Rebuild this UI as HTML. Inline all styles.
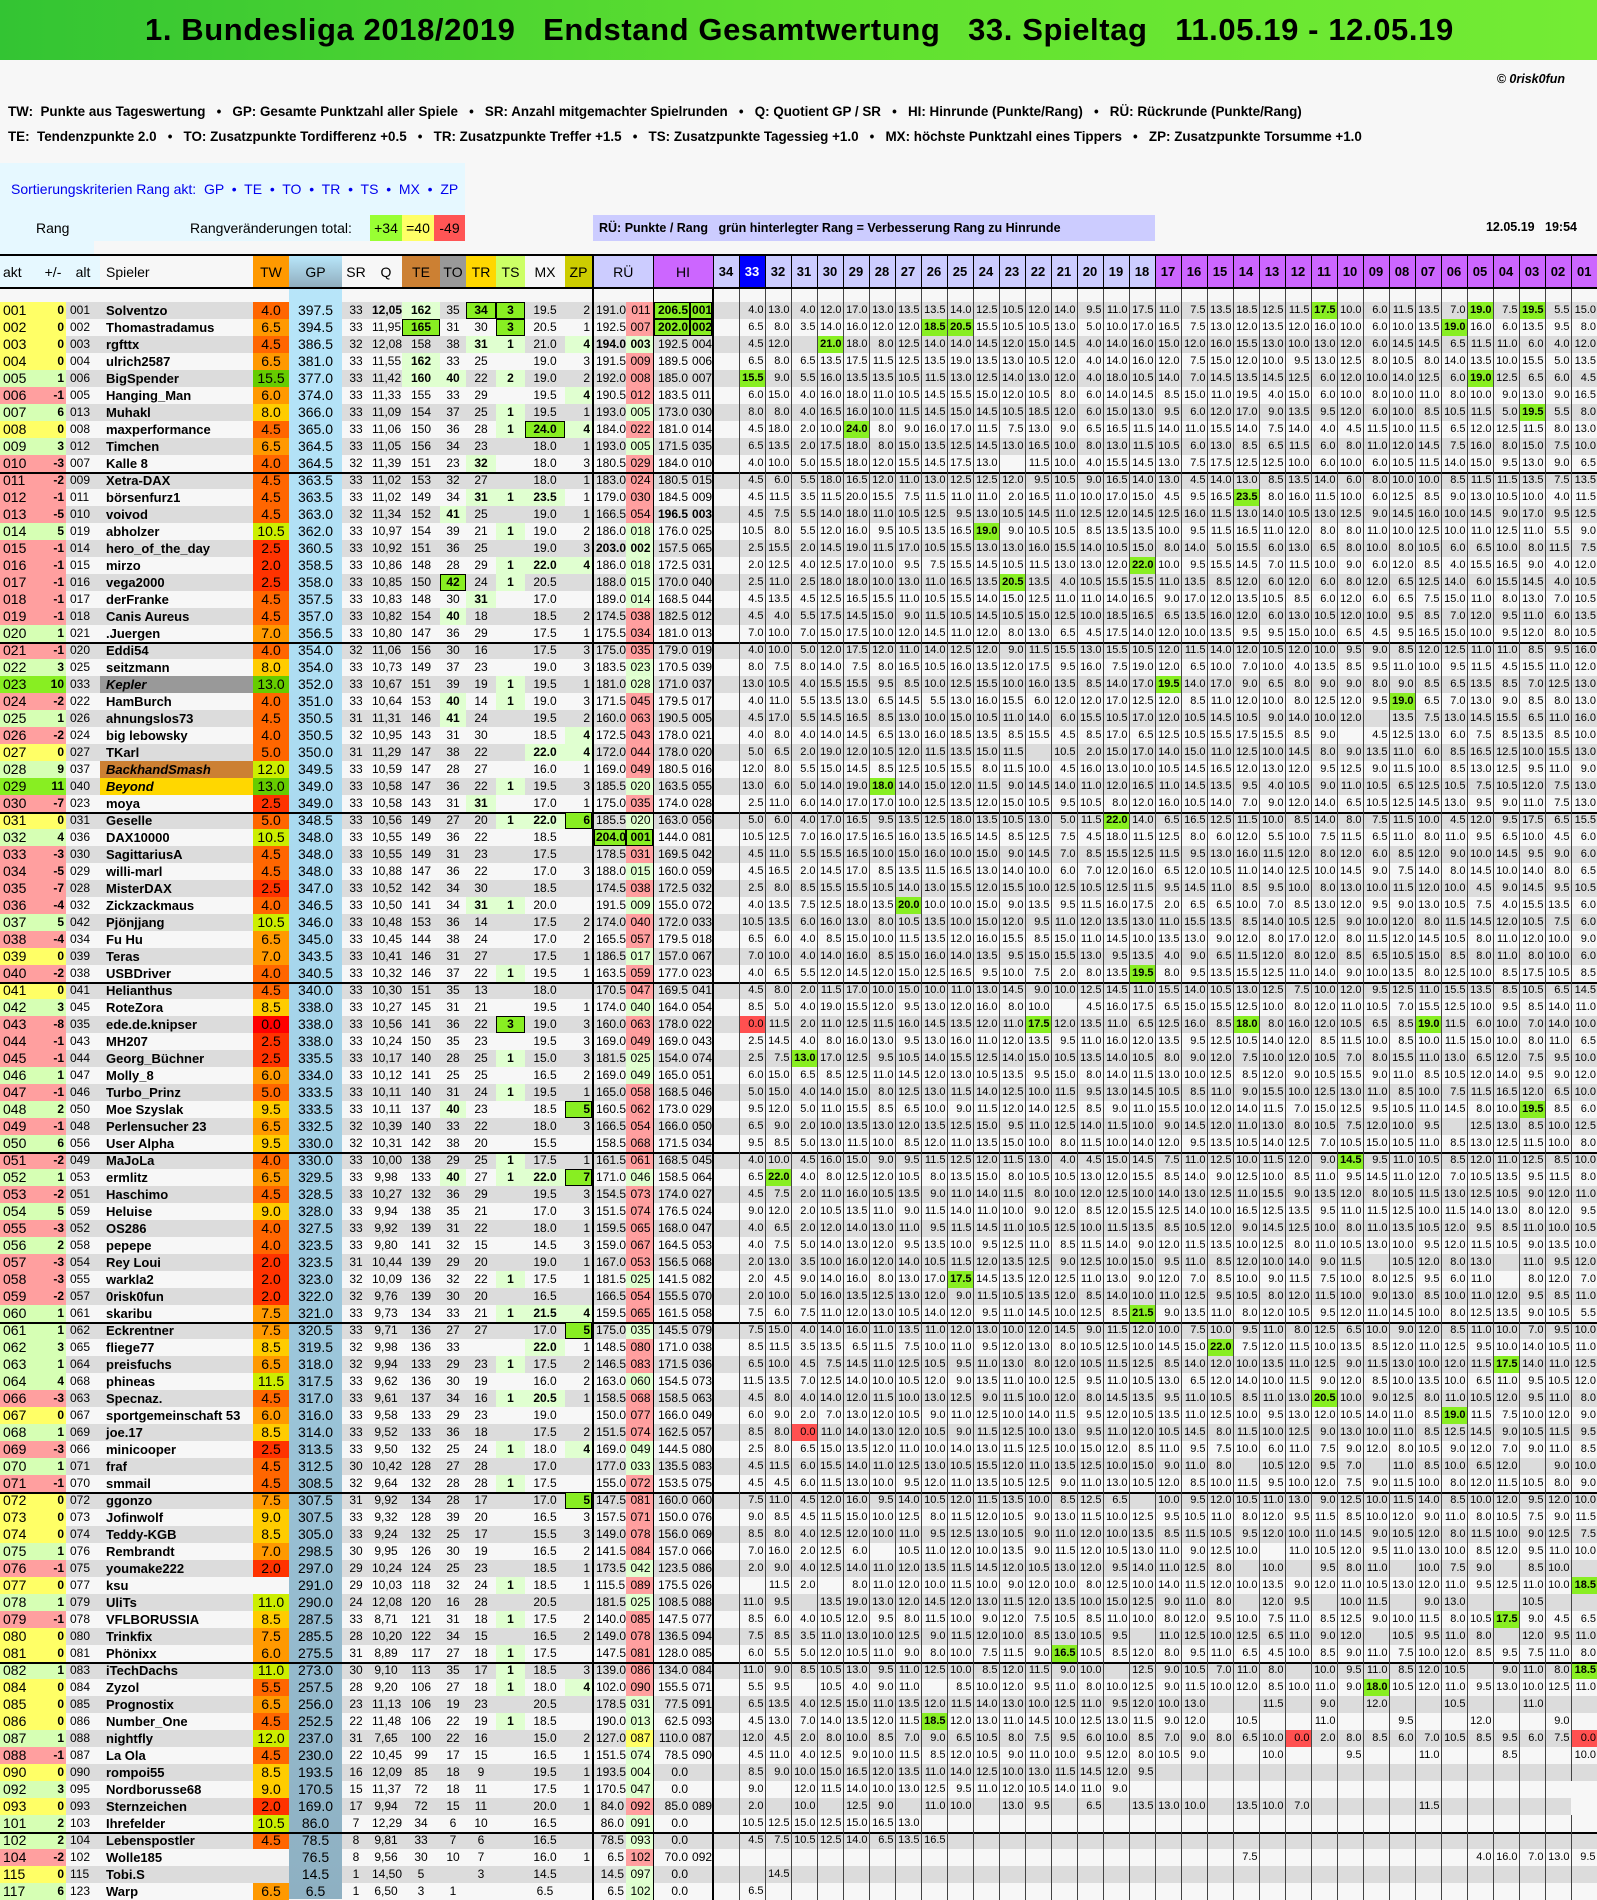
<!DOCTYPE html>
<html><head><meta charset="utf-8"><style>
body{margin:0;width:1597px;height:1899px;overflow:hidden;background:#f7f7f7;font-family:"Liberation Sans",Arial,sans-serif;position:relative;color:#000}
#ti{position:absolute;left:0;top:0;width:1597px;height:60px;background:linear-gradient(90deg,#33c433,#5fe030 50%,#74ec34);font-weight:bold;font-size:31px;line-height:60px;white-space:pre;padding-left:145px;box-sizing:border-box;letter-spacing:0.6px}
.lg{position:absolute;left:8px;font-weight:bold;font-size:13.4px;white-space:pre;line-height:16px}
#cp{position:absolute;right:32px;top:72px;font:italic bold 12.5px "Liberation Sans",sans-serif}
#sb{position:absolute;left:0;top:163px;width:465px;height:78px;background:#e6f8ff}
#sb2{position:absolute;left:0;top:241px;width:94px;height:13px;background:#e6f8ff}
#st{position:absolute;left:11px;top:181px;color:#0000ee;font-size:14px;white-space:pre}
#rg{position:absolute;left:36px;top:220px;font-size:14px}
#rv{position:absolute;left:190px;top:220px;font-size:14px}
.bx{position:absolute;top:215px;height:26px;line-height:26px;text-align:center;font-size:14px}
#ru{position:absolute;left:593px;top:215px;width:562px;height:26px;line-height:26px;background:#ccccff;font-weight:bold;font-size:12.5px;white-space:pre;padding-left:6px;box-sizing:border-box}
#dt{position:absolute;right:20px;top:220px;font-weight:bold;font-size:12.5px;white-space:pre}
#gpbg{position:absolute;left:289px;top:256px;width:53px;height:1643px;background:linear-gradient(180deg,#b8e6fa,#a8d8ee 40%,#8eb0c2)}
table{position:absolute;left:0;top:254px;border-collapse:collapse;table-layout:fixed;width:1597px}
th{height:31px;border-top:2px solid #000;border-bottom:2px solid #000;font-size:14px;font-weight:normal;padding:0;white-space:nowrap;overflow:hidden}
td{padding:0 2px;height:17px;line-height:17px;font-size:12px;white-space:nowrap;overflow:hidden;text-align:right}
tr.bl td{height:13px;background:#f7f7f7}
tr.g td{background:#dcdcdc}
td:nth-child(6){background:transparent!important;text-align:center;font-size:14px}
td:nth-child(1){text-align:left;font-size:14px;padding-left:3px}
td:nth-child(2){font-weight:bold}
td:nth-child(3){text-align:left;padding-left:4px}
td:nth-child(4){text-align:left;font-weight:bold;font-size:13px;padding-left:6px}
td:nth-child(5){text-align:center;font-size:14px}
td:nth-child(n+7):nth-child(-n+13){text-align:center}
td:nth-child(15){border-left:2px solid #000}
td:nth-child(17){border-left:1px solid #000}
td:nth-child(18){text-align:left}
td:nth-child(n+19){border-left:1px solid #444;font-size:11px;padding:0 1px}
td:nth-child(19){border-left:2px solid #000}
tr.z td:nth-child(-n+2){background:#ffff66}
tr.p td:nth-child(-n+2){background:#d6ffb4}
tr.P td:nth-child(-n+2){background:#88ee22}
tr.m td:nth-child(-n+2){background:#ff9f9f}
tr.s td{box-shadow:inset 0 2px #000}
tr.k td:nth-child(4){background:#999;font-style:italic}
tr.bh td:nth-child(4){background:#cc8033;font-style:italic}
tr.be td:nth-child(4){background:#ffd700;font-style:italic}
tr td.t0{background:#ff0000}
tr td.tr{background:#ff3300}
tr td.t1{background:#ff6600}
tr td.t2{background:#ff9900}
tr td.t3{background:#ffcc00}
tr td.t4{background:#ccee00}
tr td.t5{background:#66cc00}
tr td.r{background:#ff9f9f}
tr td.e{background:#e0ffd0}
tr td.y{background:#ffff66}
tr td.l{background:#e0ffd0;font-weight:bold}
tr td.b{background:#88ee22;font-weight:bold;box-shadow:inset 0 0 0 1px #000}
tr td.h{background:#88ee22;font-weight:bold}
tr td.x{background:#ff5050}
th.c1{background:#e6f8ff}
th.tw{background:#ff9900}
th.gp{background:linear-gradient(180deg,#b8e6fa,#90adbd)}
th.te{background:#cc8033}
th.to{background:#999}
th.trr{background:#ffd700}
th.ts{background:#ccff66}
th.zp{background:#cccc00}
th.ru{background:#ccccff;border-left:2px solid #000}
th.hi{background:#cc66ff;border-left:1px solid #000}
th.a{background:#ccccff;border-left:1px solid #000;font-weight:bold;font-size:13px}
th.v{background:#cc66ff;border-left:1px solid #000;font-weight:bold;font-size:13px}
th.c33{background:#0000ff;color:#fff;border-left:1px solid #000;font-weight:bold;font-size:13px}
</style></head><body>
<div id="ti">1. Bundesliga 2018/2019   Endstand Gesamtwertung   33. Spieltag   11.05.19 - 12.05.19</div>
<div id="cp">© 0risk0fun</div>
<div class="lg" style="top:104px">TW:  Punkte aus Tageswertung   •   GP: Gesamte Punktzahl aller Spiele   •   SR: Anzahl mitgemachter Spielrunden   •   Q: Quotient GP / SR   •   HI: Hinrunde (Punkte/Rang)   •   RÜ: Rückrunde (Punkte/Rang)</div>
<div class="lg" style="top:129px">TE:  Tendenzpunkte 2.0   •   TO: Zusatzpunkte Tordifferenz +0.5   •   TR: Zusatzpunkte Treffer +1.5   •   TS: Zusatzpunkte Tagessieg +1.0   •   MX: höchste Punktzahl eines Tippers   •   ZP: Zusatzpunkte Torsumme +1.0</div>
<div id="sb"></div><div id="sb2"></div>
<div id="st">Sortierungskriterien Rang akt:  GP  •  TE  •  TO  •  TR  •  TS  •  MX  •  ZP</div>
<div id="rg">Rang</div>
<div id="rv">Rangveränderungen total:</div>
<div class="bx" style="left:370px;width:32px;background:#99ff33">+34</div>
<div class="bx" style="left:402px;width:32px;background:#ffff66">=40</div>
<div class="bx" style="left:434px;width:31px;background:#ff5555">-49</div>
<div id="ru">RÜ: Punkte / Rang   grün hinterlegter Rang = Verbesserung Rang zu Hinrunde</div>
<div id="dt">12.05.19   19:54</div>
<div id="gpbg"></div>
<table>
<colgroup><col style="width:40px"><col style="width:26px"><col style="width:34px"><col style="width:153px"><col style="width:36px"><col style="width:53px"><col style="width:28px"><col style="width:32px"><col style="width:38px"><col style="width:26px"><col style="width:30px"><col style="width:29px"><col style="width:40px"><col style="width:28px"><col style="width:33px"><col style="width:27px"><col style="width:37px"><col style="width:23px"><col span="34" style="width:26px"></colgroup>
<thead><tr><th class="c1" style="text-align:left;padding-left:3px">akt</th><th class="c1">+/-</th><th class="c1">alt</th><th style="text-align:left;padding-left:6px">Spieler</th><th class="tw">TW</th><th class="gp">GP</th><th>SR</th><th>Q</th><th class="te">TE</th><th class="to">TO</th><th class="trr">TR</th><th class="ts">TS</th><th>MX</th><th class="zp">ZP</th><th class="ru" colspan="2">RÜ</th><th class="hi" colspan="2">HI</th><th class="a">34</th><th class="c33">33</th><th class="a">32</th><th class="a">31</th><th class="a">30</th><th class="a">29</th><th class="a">28</th><th class="a">27</th><th class="a">26</th><th class="a">25</th><th class="a">24</th><th class="a">23</th><th class="a">22</th><th class="a">21</th><th class="a">20</th><th class="a">19</th><th class="a">18</th><th class="v">17</th><th class="v">16</th><th class="v">15</th><th class="v">14</th><th class="v">13</th><th class="v">12</th><th class="v">11</th><th class="v">10</th><th class="v">09</th><th class="v">08</th><th class="v">07</th><th class="v">06</th><th class="v">05</th><th class="v">04</th><th class="v">03</th><th class="v">02</th><th class="v">01</th></tr></thead>
<tbody>
<tr class="bl"><td></td><td></td><td></td><td></td><td></td><td></td><td></td><td></td><td></td><td></td><td></td><td></td><td></td><td></td><td></td><td></td><td></td><td></td><td></td><td></td><td></td><td></td><td></td><td></td><td></td><td></td><td></td><td></td><td></td><td></td><td></td><td></td><td></td><td></td><td></td><td></td><td></td><td></td><td></td><td></td><td></td><td></td><td></td><td></td><td></td><td></td><td></td><td></td><td></td><td></td><td></td><td></td></tr>
<tr class="g z"><td>001<td>0<td>001<td>Solventzo<td class=t1>4.0<td>397.5<td>33<td><b>12,05</b><td class=l>162<td>35<td class=b>34<td class=b>3<td>19.5<td>2<td>191.0<td class=r>011<td class=b>206.5<td class=b>001<td><td>4.0<td>13.0<td>4.0<td>12.0<td>17.0<td>13.0<td>13.5<td>13.5<td>14.0<td>12.5<td>10.5<td>12.0<td>14.0<td>9.5<td>11.0<td>17.5<td>11.0<td>7.5<td>13.5<td>18.5<td>12.5<td>11.5<td class=h>17.5<td>10.0<td>6.0<td>11.5<td>13.5<td>7.0<td class=h>19.0<td>7.5<td class=h>19.5<td>5.5<td>15.0
<tr class="z"><td>002<td>0<td>002<td>Thomastradamus<td class=t2>6.5<td>394.5<td>33<td>11,95<td class=b>165<td>31<td>30<td class=b>3<td>20.5<td>1<td>192.5<td class=r>007<td class=b>202.0<td class=b>002<td><td>6.5<td>8.0<td>3.5<td>14.0<td>16.0<td>12.0<td>12.0<td class=h>18.5<td class=h>20.5<td>15.5<td>10.5<td>10.5<td>13.0<td>5.0<td>10.0<td>17.0<td>16.5<td>7.5<td>13.0<td>12.0<td>13.5<td>12.0<td>16.0<td>10.0<td>6.0<td>10.0<td>13.5<td class=h>19.0<td>16.0<td>6.0<td>13.5<td>9.5<td>8.0
<tr class="g z"><td>003<td>0<td>003<td>rgfttx<td class=t1>4.5<td>386.5<td>32<td>12,08<td>158<td>38<td class=l>31<td class=l>1<td>21.0<td class=l>4<td><b>194.0</b><td class=e><b>003</b><td>192.5<td>004<td><td>4.5<td>12.0<td><td class=h>21.0<td>18.0<td>8.0<td>12.5<td>14.0<td>14.0<td>14.5<td>12.0<td>15.0<td>14.5<td>4.0<td>14.0<td>16.0<td>15.0<td>12.0<td>16.0<td>15.5<td>13.0<td>10.0<td>13.0<td>12.0<td>6.0<td>14.5<td>14.5<td>6.5<td>11.5<td>11.0<td>6.0<td>4.0<td>12.0
<tr class="z"><td>004<td>0<td>004<td>ulrich2587<td class=t2>6.5<td>381.0<td>33<td>11,55<td class=l>162<td>33<td>25<td><td>19.0<td>3<td>191.5<td class=r>009<td>189.5<td>006<td><td>6.5<td>8.0<td>6.5<td>13.5<td>17.5<td>11.5<td>12.5<td>13.5<td>19.0<td>13.5<td>13.0<td>10.5<td>12.0<td>4.0<td>14.0<td>16.0<td>12.0<td>7.5<td>15.0<td>12.0<td>10.0<td>9.5<td>13.0<td>12.5<td>8.0<td>10.5<td>8.0<td>14.0<td>13.5<td>10.0<td>15.5<td>5.0<td>13.5
<tr class="g p"><td>005<td>1<td>006<td>BigSpender<td class=t5>15.5<td>377.0<td>33<td>11,42<td class=l>160<td class=l>40<td>22<td class=l>2<td>19.0<td>2<td>192.0<td class=r>008<td>185.0<td>007<td><td class=h>15.5<td>9.0<td>5.5<td>16.0<td>13.5<td>13.5<td>10.5<td>11.5<td>13.0<td>12.5<td>14.0<td>13.0<td>12.0<td>4.0<td>18.0<td>10.5<td>14.0<td>7.0<td>14.5<td>13.5<td>14.5<td>12.5<td>6.0<td>12.0<td>10.0<td>14.0<td>12.5<td>6.0<td class=h>19.0<td>12.5<td>6.5<td>6.0<td>4.5
<tr class="m"><td>006<td>-1<td>005<td>Hanging_Man<td class=t2>6.0<td>374.0<td>33<td>11,33<td>155<td>33<td>29<td><td>19.5<td class=l>4<td>190.5<td class=r>012<td>183.5<td>011<td><td>6.0<td>15.0<td>4.0<td>16.0<td>18.0<td>11.0<td>10.5<td>14.5<td>15.5<td>15.0<td>12.0<td>10.5<td>8.0<td>6.0<td>14.0<td>14.5<td>8.5<td>15.0<td>11.0<td>19.5<td>4.0<td>15.0<td>6.0<td>10.0<td>8.0<td>10.0<td>11.0<td>8.0<td>10.0<td>9.0<td>13.0<td>9.0<td>16.5
<tr class="g p"><td>007<td>6<td>013<td>Muhakl<td class=t3>8.0<td>366.0<td>33<td>11,09<td>154<td>37<td>25<td class=l>1<td>19.5<td>1<td>193.0<td class=e>005<td>173.0<td>030<td><td>8.0<td>8.0<td>4.0<td>16.5<td>16.0<td>10.0<td>11.5<td>14.5<td>15.0<td>14.5<td>10.5<td>18.5<td>12.0<td>6.0<td>15.0<td>13.0<td>9.5<td>6.0<td>12.0<td>17.0<td>9.0<td>13.5<td>9.5<td>12.0<td>6.0<td>10.0<td>8.5<td>10.5<td>11.5<td>5.0<td class=h>19.5<td>5.5<td>8.0
<tr class="z"><td>008<td>0<td>008<td>maxperformance<td class=t1>4.5<td>365.0<td>33<td>11,06<td>150<td>36<td>28<td class=l>1<td class=b>24.0<td class=l>4<td>184.0<td class=r>022<td>181.0<td>014<td><td>4.5<td>18.0<td>2.0<td>10.0<td class=h>24.0<td>8.0<td>9.0<td>16.0<td>17.0<td>11.5<td>7.5<td>13.0<td>9.0<td>6.5<td>16.5<td>11.5<td>14.0<td>11.0<td>15.5<td>14.0<td>7.5<td>14.0<td>4.0<td>4.5<td>11.5<td>10.0<td>11.5<td>6.5<td>12.0<td>12.5<td>11.5<td>8.0<td>13.0
<tr class="g p"><td>009<td>3<td>012<td>Timchen<td class=t2>6.5<td>364.5<td>33<td>11,05<td>156<td>34<td>23<td><td>18.0<td>1<td>193.0<td class=e>005<td>171.5<td>035<td><td>6.5<td>13.5<td>2.0<td>17.5<td>18.0<td>8.0<td>15.0<td>13.5<td>12.5<td>14.5<td>13.0<td>16.5<td>10.0<td>8.0<td>13.0<td>11.5<td>10.5<td>6.0<td>13.0<td>8.5<td>6.5<td>11.5<td>6.0<td>8.0<td>11.0<td>12.0<td>14.5<td>7.5<td>16.0<td>8.0<td>15.0<td>7.5<td>10.0
<tr class="m"><td>010<td>-3<td>007<td>Kalle 8<td class=t1>4.0<td>364.5<td>32<td>11,39<td>151<td>23<td class=l>32<td><td>18.0<td>3<td>180.5<td class=r>029<td>184.0<td>010<td><td>4.0<td>10.0<td>5.0<td>15.5<td>18.0<td>12.0<td>15.5<td>14.5<td>17.5<td>13.0<td><td>11.5<td>10.0<td>4.0<td>15.5<td>14.5<td>13.0<td>7.5<td>17.5<td>12.5<td>12.5<td>10.0<td>6.0<td>10.0<td>6.0<td>10.5<td>11.5<td>14.0<td>15.0<td>9.5<td>13.0<td>9.0<td>6.5
<tr class="g m s"><td>011<td>-2<td>009<td>Xetra-DAX<td class=t1>4.5<td>363.5<td>33<td>11,02<td>153<td>32<td>27<td><td>18.0<td>1<td>183.0<td class=r>024<td>180.5<td>015<td><td>4.5<td>6.0<td>5.5<td>18.0<td>16.5<td>12.0<td>11.0<td>13.0<td>12.5<td>12.5<td>12.0<td>9.5<td>10.5<td>9.0<td>16.5<td>14.0<td>13.0<td>4.5<td>14.0<td>13.0<td>8.5<td>13.5<td>14.0<td>6.0<td>8.0<td>10.0<td>10.0<td>8.5<td>11.5<td>11.5<td>13.5<td>7.5<td>13.5
<tr class="m"><td>012<td>-1<td>011<td>börsenfurz1<td class=t1>4.5<td>363.5<td>33<td>11,02<td>149<td>34<td class=l>31<td class=l>1<td class=l>23.5<td>1<td>179.0<td class=r>030<td>184.5<td>009<td><td>4.5<td>11.5<td>3.5<td>11.5<td>20.0<td>15.5<td>7.5<td>11.5<td>11.0<td>11.0<td>2.0<td>16.5<td>11.0<td>10.0<td>17.0<td>15.0<td>4.5<td>9.5<td>16.5<td class=h>23.5<td>8.0<td>16.0<td>11.5<td>10.0<td>6.0<td>12.5<td>8.5<td>9.0<td>13.0<td>10.5<td>10.0<td>4.0<td>11.5
<tr class="g m"><td>013<td>-5<td>010<td>voivod<td class=t1>4.5<td>363.0<td>32<td>11,34<td>152<td class=l>41<td>25<td><td>19.0<td>1<td>166.5<td class=r>054<td><b>196.5</b><td><b>003</b><td><td>4.5<td>7.5<td>5.5<td>14.0<td>18.0<td>11.0<td>10.5<td>12.5<td>9.5<td>13.0<td>10.5<td>14.5<td>11.0<td>12.5<td>12.0<td>14.5<td>12.5<td>16.0<td>11.5<td>13.0<td>14.0<td>10.5<td>13.0<td>12.5<td>9.0<td>14.5<td>16.0<td>10.0<td>14.5<td>9.0<td>17.0<td>9.5<td>12.5
<tr class="p"><td>014<td>5<td>019<td>abholzer<td class=t4>10.5<td>362.0<td>33<td>10,97<td>154<td>39<td>21<td class=l>1<td>19.0<td>2<td>186.0<td class=e>018<td>176.0<td>025<td><td>10.5<td>8.0<td>5.5<td>12.0<td>16.0<td>9.5<td>10.5<td>13.5<td>16.5<td class=h>19.0<td>9.0<td>10.5<td>10.5<td>8.5<td>13.5<td>13.5<td>10.0<td>9.5<td>11.5<td>16.5<td>11.0<td>12.0<td>8.0<td>8.0<td>11.0<td>10.0<td>12.5<td>10.0<td>11.0<td>12.5<td>11.0<td>5.5<td>9.0
<tr class="g m"><td>015<td>-1<td>014<td>hero_of_the_day<td class=tr>2.5<td>360.5<td>33<td>10,92<td>151<td>36<td>25<td><td>19.0<td>3<td><b>203.0</b><td class=e><b>002</b><td>157.5<td>065<td><td>2.5<td>15.5<td>2.0<td>14.5<td>19.0<td>11.5<td>17.0<td>10.5<td>15.5<td>13.0<td>13.0<td>16.0<td>15.5<td>14.0<td>10.5<td>15.0<td>8.0<td>14.0<td>5.0<td>15.5<td>6.0<td>13.0<td>6.5<td>8.0<td>10.0<td>8.0<td>10.5<td>6.0<td>6.5<td>10.0<td>8.0<td>11.5<td>7.5
<tr class="m"><td>016<td>-1<td>015<td>mirzo<td class=tr>2.0<td>358.5<td>33<td>10,86<td>148<td>28<td>29<td class=l>1<td class=l>22.0<td class=l>4<td>186.0<td class=e>018<td>172.5<td>031<td><td>2.0<td>12.5<td>4.0<td>12.5<td>17.0<td>10.0<td>9.5<td>7.5<td>15.5<td>14.5<td>10.5<td>11.5<td>13.0<td>13.0<td>12.0<td class=h>22.0<td>10.0<td>9.5<td>15.5<td>14.5<td>7.0<td>11.5<td>10.0<td>9.0<td>6.0<td>12.0<td>8.5<td>4.0<td>15.5<td>16.5<td>9.0<td>4.0<td>12.0
<tr class="g m"><td>017<td>-1<td>016<td>vega2000<td class=tr>2.5<td>358.0<td>33<td>10,85<td>150<td class=b>42<td>24<td class=l>1<td>20.5<td><td>188.0<td class=e>015<td>170.0<td>040<td><td>2.5<td>11.0<td>2.5<td>18.0<td>18.0<td>10.0<td>13.0<td>11.0<td>16.5<td>13.5<td class=h>20.5<td>13.5<td>4.0<td>10.5<td>15.5<td>15.5<td>11.0<td>13.5<td>8.5<td>12.0<td>6.0<td>12.0<td>6.0<td>8.0<td>12.0<td>6.5<td>12.5<td>14.0<td>6.0<td>15.5<td>14.5<td>4.0<td>10.5
<tr class="m"><td>018<td>-1<td>017<td>derFranke<td class=t1>4.5<td>357.5<td>33<td>10,83<td>148<td>30<td class=l>31<td><td>17.0<td><td>189.0<td class=e>014<td>168.5<td>044<td><td>4.5<td>13.5<td>4.5<td>12.5<td>16.5<td>15.5<td>11.0<td>10.5<td>15.5<td>14.0<td>15.0<td>12.5<td>11.0<td>11.0<td>14.0<td>16.5<td>9.0<td>17.0<td>12.0<td>13.5<td>10.5<td>8.5<td>6.0<td>12.0<td>6.0<td>6.5<td>7.5<td>15.0<td>11.0<td>8.0<td>13.0<td>7.0<td>10.5
<tr class="g m"><td>019<td>-1<td>018<td>Canis Aureus<td class=t1>4.5<td>357.0<td>33<td>10,82<td>154<td class=l>40<td>18<td><td>18.5<td>2<td>174.5<td class=r>038<td>182.5<td>012<td><td>4.5<td>4.0<td>5.5<td>17.5<td>14.5<td>15.0<td>9.0<td>11.5<td>10.5<td>14.5<td>10.5<td>15.0<td>12.5<td>10.0<td>18.5<td>16.5<td>6.5<td>13.5<td>16.0<td>12.0<td>6.0<td>13.0<td>10.5<td>12.0<td>10.0<td>9.5<td>8.5<td>7.0<td>12.0<td>9.5<td>11.0<td>6.0<td>13.5
<tr class="p"><td>020<td>1<td>021<td>.Juergen<td class=t2>7.0<td>356.5<td>33<td>10,80<td>147<td>36<td>29<td><td>17.5<td>1<td>175.5<td class=r>034<td>181.0<td>013<td><td>7.0<td>10.0<td>7.0<td>15.0<td>17.5<td>10.0<td>12.0<td>14.5<td>11.0<td>12.0<td>8.0<td>13.0<td>6.5<td>4.5<td>17.5<td>14.0<td>12.0<td>10.0<td>13.5<td>9.5<td>9.5<td>15.0<td>10.0<td>6.5<td>4.5<td>9.5<td>16.5<td>15.0<td>10.0<td>9.5<td>12.0<td>8.0<td>10.5
<tr class="g m s"><td>021<td>-1<td>020<td>Eddi54<td class=t1>4.0<td>354.0<td>32<td>11,06<td>156<td>30<td>16<td><td>17.5<td>3<td>175.0<td class=r>035<td>179.0<td>019<td><td>4.0<td>10.0<td>5.0<td>12.0<td>17.5<td>12.0<td>11.0<td>14.0<td>12.5<td>12.0<td>9.0<td>11.5<td>15.5<td>13.0<td>15.5<td>10.5<td>12.0<td>11.5<td>14.0<td>12.0<td>10.5<td>12.0<td>10.0<td>9.5<td>9.0<td>8.5<td>12.0<td>12.5<td>11.0<td>11.0<td>8.5<td>9.5<td>16.0
<tr class="p"><td>022<td>3<td>025<td>seitzmann<td class=t3>8.0<td>354.0<td>33<td>10,73<td>149<td>37<td>23<td><td>19.0<td>3<td>183.5<td class=e>023<td>170.5<td>039<td><td>8.0<td>7.5<td>8.0<td>14.0<td>7.5<td>8.0<td>16.5<td>10.5<td>16.0<td>13.5<td>12.0<td>17.5<td>9.5<td>16.0<td>7.5<td>19.0<td>12.0<td>6.5<td>10.0<td>7.0<td>10.0<td>4.0<td>13.5<td>8.5<td>9.5<td>11.0<td>10.0<td>9.5<td>11.5<td>4.5<td>15.5<td>11.0<td>12.0
<tr class="g P k"><td>023<td>10<td>033<td>Kepler<td class=t5>13.0<td>352.0<td>33<td>10,67<td>151<td>39<td>19<td class=l>1<td>19.5<td>1<td>181.0<td class=e>028<td>171.0<td>037<td><td>13.0<td>10.5<td>4.0<td>15.5<td>15.5<td>9.5<td>8.5<td>10.0<td>12.5<td>15.5<td>10.0<td>16.0<td>13.5<td>8.5<td>14.0<td>17.0<td class=h>19.5<td>14.0<td>17.0<td>9.0<td>6.5<td>8.0<td>9.0<td>9.0<td>8.0<td>9.0<td>8.5<td>6.5<td>13.5<td>8.5<td>7.0<td>12.5<td>13.0
<tr class="m"><td>024<td>-2<td>022<td>HamBurch<td class=t1>4.0<td>351.0<td>33<td>10,64<td>153<td class=l>40<td>14<td class=l>1<td>19.0<td>3<td>171.5<td class=r>045<td>179.5<td>017<td><td>4.0<td>11.0<td>5.5<td>13.5<td>13.0<td>6.5<td>14.5<td>5.5<td>13.0<td>16.0<td>15.5<td>6.0<td>12.0<td>12.0<td>17.0<td>12.5<td>12.0<td>8.5<td>11.0<td>12.0<td>10.0<td>8.0<td>12.5<td>12.0<td>9.5<td class=h>19.0<td>6.5<td>7.0<td>13.0<td>9.0<td>8.5<td>8.0<td>13.0
<tr class="g p"><td>025<td>1<td>026<td>ahnungslos73<td class=t1>4.5<td>350.5<td>31<td>11,31<td>146<td class=l>41<td>24<td><td>19.5<td>2<td>160.0<td class=r>063<td>190.5<td>005<td><td>4.5<td>17.0<td>5.5<td>14.5<td>16.5<td>8.5<td>13.0<td>10.0<td>15.0<td>10.5<td>11.0<td>14.0<td>6.0<td>15.5<td>10.5<td>17.0<td>12.0<td>10.5<td>14.5<td>10.5<td>9.0<td>14.0<td>10.0<td>12.0<td><td>13.5<td>7.5<td>13.0<td>14.5<td>15.5<td>6.5<td>11.0<td>16.0
<tr class="m"><td>026<td>-2<td>024<td>big lebowsky<td class=t1>4.0<td>350.5<td>32<td>10,95<td>143<td>31<td>30<td><td>18.5<td class=l>4<td>172.5<td class=r>043<td>178.0<td>021<td><td>4.0<td>8.0<td>4.0<td>14.0<td>14.5<td>6.5<td>13.0<td>16.0<td>18.5<td>13.5<td>8.5<td>15.5<td>4.5<td>8.5<td>17.0<td>6.5<td>12.5<td>10.5<td>15.5<td>17.5<td>15.5<td>8.5<td>9.0<td><td>4.5<td>12.5<td>13.0<td>6.0<td>7.5<td>8.5<td>13.5<td>8.5<td>10.0
<tr class="g z"><td>027<td>0<td>027<td>TKarl<td class=t1>5.0<td>350.0<td>31<td>11,29<td>147<td>38<td>22<td><td class=l>22.0<td class=l>4<td>172.0<td class=r>044<td>178.0<td>020<td><td>5.0<td>6.5<td>2.0<td>19.0<td>12.0<td>10.5<td>12.0<td>11.5<td>13.5<td>15.0<td>11.5<td><td>10.5<td>2.0<td>15.0<td>17.0<td>14.0<td>15.0<td>11.0<td>12.5<td>10.0<td>14.5<td>8.0<td>9.0<td>13.5<td>11.0<td>6.0<td>8.5<td>16.5<td>12.5<td>10.0<td>15.5<td>13.0
<tr class="p bh"><td>028<td>9<td>037<td>BackhandSmash<td class=t4>12.0<td>349.5<td>33<td>10,59<td>147<td>28<td>27<td><td>16.0<td>1<td>169.0<td class=r>049<td>180.5<td>016<td><td>12.0<td>8.0<td>5.5<td>15.0<td>14.5<td>8.5<td>12.5<td>10.5<td>15.5<td>8.0<td>11.5<td>10.0<td>4.5<td>16.0<td>13.0<td>10.0<td>10.5<td>14.5<td>16.5<td>12.0<td>13.0<td>12.0<td>9.5<td>12.5<td>9.0<td>11.5<td>10.0<td>8.5<td>13.0<td>12.5<td>9.5<td>11.0<td>9.0
<tr class="g P be"><td>029<td>11<td>040<td>Beyond<td class=t5>13.0<td>349.0<td>33<td>10,58<td>147<td>36<td>22<td class=l>1<td>19.5<td>3<td>185.5<td class=e>020<td>163.5<td>055<td><td>13.0<td>6.0<td>5.0<td>14.0<td>19.0<td class=h>18.0<td>14.0<td>15.0<td>12.0<td>11.5<td>9.0<td>14.5<td>14.0<td>11.0<td>12.0<td>16.5<td>11.0<td>14.5<td>13.5<td>9.5<td>4.0<td>10.5<td>9.0<td>11.0<td>10.5<td>6.5<td>12.5<td>10.5<td>7.5<td>10.5<td>12.0<td>7.5<td>13.0
<tr class="m"><td>030<td>-7<td>023<td>moya<td class=tr>2.5<td>349.0<td>33<td>10,58<td>143<td>31<td class=l>31<td><td>17.0<td>1<td>175.0<td class=r>035<td>174.0<td>028<td><td>2.5<td>11.0<td>6.0<td>14.0<td>17.0<td>17.0<td>10.0<td>12.5<td>13.5<td>12.0<td>15.0<td>10.5<td>9.5<td>10.5<td>8.0<td>12.0<td>16.0<td>10.5<td>14.0<td>7.0<td>9.0<td>12.0<td>14.0<td>6.5<td>10.5<td>12.5<td>14.5<td>13.0<td>9.5<td>9.0<td>11.0<td>7.5<td>13.0
<tr class="g z s"><td>031<td>0<td>031<td>Geselle<td class=t1>5.0<td>348.5<td>33<td>10,56<td>149<td>27<td>20<td class=l>1<td class=l>22.0<td class=b>6<td>185.5<td class=e>020<td>163.0<td>056<td><td>5.0<td>6.0<td>4.0<td>17.0<td>16.5<td>9.5<td>13.5<td>12.5<td>18.0<td>13.5<td>10.5<td>13.0<td>5.0<td>11.5<td class=h>22.0<td>14.0<td>6.5<td>16.5<td>12.5<td>11.5<td>10.0<td>8.5<td>14.0<td>8.0<td>7.5<td>11.5<td>10.0<td>4.5<td>12.0<td>9.5<td>17.5<td>6.5<td>15.5
<tr class="p"><td>032<td>4<td>036<td>DAX10000<td class=t4>10.5<td>348.0<td>33<td>10,55<td>149<td>36<td>22<td><td>18.5<td><td class=b>204.0<td class=b>001<td>144.0<td>081<td><td>10.5<td>12.5<td>7.0<td>16.0<td>17.5<td>16.5<td>16.0<td>13.5<td>16.5<td>14.5<td>8.5<td>12.5<td>7.5<td>4.5<td>18.0<td>11.5<td>12.5<td>8.0<td>6.0<td>12.0<td>5.5<td>10.0<td>7.5<td>11.5<td>6.5<td>11.0<td>8.0<td>11.0<td>9.5<td>6.5<td>10.0<td>4.5<td>6.0
<tr class="g m"><td>033<td>-3<td>030<td>SagittariusA<td class=t1>4.5<td>348.0<td>33<td>10,55<td>149<td>31<td>23<td><td>17.5<td><td>178.5<td class=r>031<td>169.5<td>042<td><td>4.5<td>11.0<td>5.5<td>15.5<td>16.5<td>10.0<td>15.0<td>16.0<td>10.0<td>15.0<td>9.0<td>14.5<td>7.0<td>8.5<td>15.5<td>12.5<td>11.5<td>9.5<td>13.0<td>16.0<td>11.5<td>12.0<td>8.0<td>12.0<td>6.0<td>8.5<td>12.0<td>9.0<td>10.0<td>14.5<td>9.5<td>9.0<td>6.0
<tr class="m"><td>034<td>-5<td>029<td>willi-marl<td class=t1>4.5<td>348.0<td>33<td>10,88<td>147<td>36<td>22<td><td>17.0<td>3<td>188.0<td class=e>015<td>160.0<td>059<td><td>4.5<td>16.5<td>2.0<td>14.5<td>17.0<td>8.5<td>13.5<td>11.5<td>16.5<td>13.0<td>14.0<td>10.0<td>6.0<td>7.0<td>12.0<td>16.0<td>6.5<td>12.0<td>10.5<td>11.0<td>14.0<td>12.5<td>10.0<td>14.5<td>9.0<td>7.5<td>14.0<td>8.0<td>14.5<td>10.0<td>14.0<td>8.0<td>6.5
<tr class="g m"><td>035<td>-7<td>028<td>MisterDAX<td class=tr>2.5<td>347.0<td>33<td>10,52<td>142<td>34<td>30<td><td>18.5<td><td>174.5<td class=r>038<td>172.5<td>032<td><td>2.5<td>8.0<td>8.5<td>15.5<td>15.5<td>10.5<td>14.0<td>13.0<td>15.5<td>12.0<td>15.5<td>10.0<td>12.5<td>10.5<td>12.5<td>11.5<td>9.5<td>14.5<td>11.0<td>8.5<td>9.5<td>10.0<td>8.0<td>13.0<td>10.0<td>11.5<td>12.0<td>10.0<td>4.5<td>9.0<td>14.5<td>9.5<td>10.5
<tr class="m"><td>036<td>-4<td>032<td>Zickzackmaus<td class=t1>4.0<td>346.5<td>33<td>10,50<td>141<td>34<td class=l>31<td class=l>1<td>20.0<td><td>191.5<td class=e>009<td>155.0<td>072<td><td>4.0<td>13.5<td>7.5<td>12.5<td>18.0<td>13.5<td class=h>20.0<td>10.0<td>10.0<td>15.0<td>9.0<td>13.5<td>9.5<td>11.5<td>16.0<td>17.5<td>2.0<td>6.5<td>6.5<td>10.0<td>7.0<td>8.5<td>13.0<td>12.0<td>9.5<td>9.0<td>13.0<td>10.5<td>7.5<td>4.0<td>15.5<td>13.5<td>6.0
<tr class="g p"><td>037<td>5<td>042<td>Pjönjjang<td class=t4>10.5<td>346.0<td>33<td>10,48<td>153<td>36<td>14<td><td>17.5<td>2<td>174.0<td class=r>040<td>172.0<td>033<td><td>10.5<td>13.5<td>6.0<td>16.0<td>13.0<td>8.0<td>10.5<td>13.5<td>10.0<td>15.0<td>12.0<td>9.5<td>11.0<td>12.0<td>13.5<td>13.0<td>11.0<td>15.5<td>13.5<td>8.5<td>14.0<td>10.5<td>12.5<td>9.0<td>10.0<td>12.0<td>8.0<td>11.5<td>14.5<td>12.0<td>10.5<td>7.5<td>6.0
<tr class="m"><td>038<td>-4<td>034<td>Fu Hu<td class=t2>6.5<td>345.0<td>33<td>10,45<td>144<td>38<td>24<td><td>17.0<td>2<td>165.5<td class=r>057<td>179.5<td>018<td><td>6.5<td>6.0<td>4.0<td>8.5<td>15.0<td>10.0<td>11.5<td>13.5<td>12.0<td>16.0<td>15.5<td>8.5<td>15.0<td>11.0<td>14.5<td>10.0<td>13.5<td>13.0<td>9.0<td>12.0<td>8.0<td>17.0<td>12.0<td>8.0<td>11.5<td>12.0<td>14.5<td>10.5<td>8.0<td>11.0<td>12.0<td>10.0<td>9.0
<tr class="g z"><td>039<td>0<td>039<td>Teras<td class=t2>7.0<td>343.5<td>33<td>10,41<td>146<td>31<td>27<td><td>17.5<td>1<td>186.5<td class=e>017<td>157.0<td>067<td><td>7.0<td>10.0<td>4.0<td>14.0<td>16.0<td>8.5<td>15.0<td>16.0<td>14.0<td>13.5<td>9.5<td>15.0<td>15.5<td>13.0<td>9.5<td>13.5<td>4.0<td>9.0<td>6.5<td>11.5<td>12.0<td>8.0<td>12.0<td>8.5<td>6.5<td>10.5<td>15.0<td>8.5<td>8.0<td>11.0<td>8.0<td>10.0<td>6.0
<tr class="m"><td>040<td>-2<td>038<td>USBDriver<td class=t1>4.0<td>340.5<td>33<td>10,32<td>146<td>37<td>22<td class=l>1<td>19.5<td>1<td>163.5<td class=r>059<td>177.0<td>023<td><td>4.0<td>6.5<td>5.5<td>12.0<td>14.5<td>12.0<td>15.0<td>12.5<td>16.5<td>9.5<td>10.0<td>7.5<td>2.0<td>8.0<td>13.5<td class=h>19.5<td>8.0<td>9.5<td>13.5<td>15.5<td>12.5<td>11.0<td>14.0<td>9.0<td>10.0<td>13.5<td>8.0<td>12.5<td>10.0<td>8.5<td>17.5<td>10.5<td>8.5
<tr class="g z s"><td>041<td>0<td>041<td>Helianthus<td class=t1>4.5<td>340.0<td>33<td>10,30<td>151<td>35<td>13<td><td>18.0<td><td>170.5<td class=r>047<td>169.5<td>041<td><td>4.5<td>8.0<td>2.0<td>11.5<td>17.0<td>10.0<td>15.0<td>10.0<td>11.0<td>13.0<td>14.5<td>9.0<td>10.0<td>12.5<td>14.5<td>11.0<td>15.5<td>14.0<td>10.5<td>13.0<td>12.5<td>7.5<td>10.0<td>12.0<td>9.5<td>12.5<td>11.0<td>15.5<td>13.5<td>8.5<td>10.5<td>6.5<td>14.5
<tr class="p"><td>042<td>3<td>045<td>RoteZora<td class=t3>8.5<td>338.0<td>33<td>10,27<td>145<td>31<td>21<td><td>19.5<td>1<td>174.0<td class=e>040<td>164.0<td>054<td><td>8.5<td>5.0<td>4.0<td>19.0<td>15.5<td>12.0<td>9.5<td>13.0<td>12.0<td>16.0<td>8.0<td>10.0<td><td>4.5<td>16.0<td>17.5<td>6.5<td>15.0<td>15.5<td>12.5<td>10.0<td>8.0<td>12.0<td>11.0<td>10.5<td>7.0<td>15.5<td>12.5<td>10.0<td>9.5<td>8.5<td>14.0<td>11.0
<tr class="g m"><td>043<td>-8<td>035<td>ede.de.knipser<td class=t0>0.0<td>338.0<td>33<td>10,56<td>141<td>36<td>22<td class=b>3<td>19.0<td>3<td>160.0<td class=r>063<td>178.0<td>022<td><td class=x>0.0<td>11.5<td>2.0<td>11.0<td>12.5<td>11.5<td>16.0<td>14.5<td>13.5<td>12.0<td>11.0<td class=h>17.5<td>12.0<td>13.5<td>11.0<td>6.5<td>12.5<td>16.0<td>8.5<td class=h>18.0<td>8.0<td>16.0<td>12.0<td>10.5<td>6.5<td>8.5<td class=h>19.0<td>11.5<td>6.0<td>10.0<td>7.0<td>14.0<td>10.0
<tr class="m"><td>044<td>-1<td>043<td>MH207<td class=tr>2.5<td>338.0<td>33<td>10,24<td>150<td>35<td>23<td><td>19.5<td>3<td>169.0<td class=r>049<td>169.0<td>043<td><td>2.5<td>14.5<td>4.0<td>8.0<td>16.0<td>13.0<td>9.5<td>13.0<td>16.0<td>11.0<td>12.0<td>13.5<td>9.5<td>11.0<td>16.0<td>12.0<td>13.5<td>9.5<td>12.5<td>10.5<td>14.0<td>12.0<td>8.5<td>11.5<td>10.0<td>8.5<td>10.0<td>11.5<td>15.0<td>10.0<td>8.0<td>11.0<td>6.5
<tr class="g m"><td>045<td>-1<td>044<td>Georg_Büchner<td class=tr>2.5<td>335.5<td>33<td>10,17<td>140<td>28<td>25<td class=l>1<td>15.0<td>3<td>181.5<td class=e>025<td>154.0<td>074<td><td>2.5<td>7.5<td class=h>13.0<td>17.0<td>12.5<td>9.5<td>10.5<td>14.0<td>15.5<td>12.5<td>14.0<td>15.0<td>10.5<td>13.5<td>14.0<td>10.5<td>8.0<td>9.0<td>12.0<td>7.5<td>10.0<td>12.0<td>10.5<td>7.0<td>8.0<td>15.5<td>11.0<td>13.0<td>6.5<td>12.0<td>7.5<td>9.5<td>10.0
<tr class="p"><td>046<td>1<td>047<td>Molly_8<td class=t2>6.0<td>334.0<td>33<td>10,12<td>141<td>25<td>25<td><td>16.5<td>2<td>169.0<td class=e>049<td>165.0<td>051<td><td>6.0<td>15.0<td>6.5<td>8.5<td>12.5<td>11.0<td>14.5<td>12.0<td>13.0<td>10.5<td>13.5<td>9.5<td>15.0<td>8.0<td>14.0<td>11.5<td>13.0<td>10.0<td>12.5<td>8.5<td>12.0<td>9.0<td>10.5<td>15.5<td>9.0<td>11.0<td>8.5<td>10.5<td>12.0<td>14.0<td>9.5<td>9.0<td>12.0
<tr class="g m"><td>047<td>-1<td>046<td>Turbo_Prinz<td class=t1>5.0<td>333.5<td>33<td>10,11<td>140<td>31<td>24<td class=l>1<td>19.5<td>1<td>165.0<td class=r>058<td>168.5<td>046<td><td>5.0<td>15.0<td>4.0<td>14.0<td>15.0<td>8.0<td>12.5<td>13.0<td>11.5<td>14.0<td>12.5<td>10.0<td>11.5<td>9.5<td>13.0<td>14.5<td>10.5<td>8.5<td>11.0<td>9.0<td>15.5<td>10.0<td>12.5<td>13.0<td>11.0<td>8.5<td>10.0<td>7.5<td>11.5<td>16.5<td>12.0<td>6.5<td>10.0
<tr class="p"><td>048<td>2<td>050<td>Moe Szyslak<td class=t3>9.5<td>333.5<td>33<td>10,11<td>137<td class=l>40<td>23<td><td>18.5<td class=b>5<td>160.5<td class=r>062<td>173.0<td>029<td><td>9.5<td>12.0<td>5.0<td>11.0<td>15.5<td>8.5<td>6.5<td>10.0<td>9.0<td>11.5<td>12.0<td>14.0<td>12.5<td>8.5<td>9.0<td>11.0<td>15.5<td>10.0<td>12.0<td>14.0<td>11.5<td>7.0<td>15.0<td>12.5<td>9.5<td>10.5<td>11.0<td>14.5<td>8.0<td>10.0<td class=h>19.5<td>8.5<td>6.0
<tr class="g m"><td>049<td>-1<td>048<td>Perlensucher 23<td class=t2>6.5<td>332.5<td>32<td>10,39<td>140<td>33<td>22<td><td>18.0<td>3<td>166.5<td class=r>054<td>166.0<td>050<td><td>6.5<td>9.0<td>2.0<td>10.0<td>13.5<td>13.0<td>12.0<td>13.5<td>12.5<td>15.0<td>9.5<td>11.0<td>12.5<td>14.0<td>11.5<td>10.0<td>9.0<td>14.5<td>12.0<td>11.0<td>13.0<td>8.0<td>10.5<td>7.5<td>12.0<td>10.0<td>9.5<td><td>12.5<td>13.0<td>8.5<td>10.0<td>12.5
<tr class="p"><td>050<td>6<td>056<td>User Alpha<td class=t3>9.5<td>330.0<td>32<td>10,31<td>142<td>38<td>20<td><td>15.5<td><td>158.5<td class=r>068<td>171.5<td>034<td><td>9.5<td>8.5<td>5.0<td>13.0<td>11.5<td>10.0<td>8.5<td>12.0<td>11.0<td>13.5<td>15.0<td>10.0<td>8.0<td>11.5<td>10.0<td>14.0<td>12.0<td>9.5<td>13.5<td>10.5<td>14.0<td>12.5<td>7.0<td>10.5<td>15.0<td>10.5<td>11.0<td>8.5<td>13.0<td>12.5<td>11.5<td>10.0<td>8.0
<tr class="g m s"><td>051<td>-2<td>049<td>MaJoLa<td class=t1>4.0<td>330.0<td>33<td>10,00<td>138<td>29<td>25<td class=l>1<td>17.5<td>1<td>161.5<td class=r>061<td>168.5<td>045<td><td>4.0<td>10.0<td>4.5<td>16.0<td>15.0<td>9.0<td>9.5<td>11.5<td>12.5<td>12.0<td>11.5<td>13.0<td>4.0<td>4.5<td>15.0<td>14.5<td>7.5<td>11.0<td>12.5<td>10.0<td>11.5<td>12.0<td>9.0<td class=h>14.5<td>9.5<td>11.0<td>10.5<td>8.5<td>12.0<td>11.0<td>12.5<td>8.5<td>10.0
<tr class="p"><td>052<td>1<td>053<td>ermlitz<td class=t2>6.5<td>329.5<td>33<td>9,98<td>133<td class=l>40<td>27<td class=l>1<td class=l>22.0<td class=b>7<td>171.0<td class=e>046<td>158.5<td>064<td><td>6.5<td class=h>22.0<td>4.0<td>8.0<td>12.5<td>12.0<td>10.5<td>8.0<td>13.5<td>15.0<td>8.0<td>10.5<td>10.5<td>13.0<td>12.0<td>15.5<td>8.5<td>14.0<td>9.0<td>12.5<td>10.0<td>8.5<td>11.0<td>9.5<td>14.5<td>11.0<td>12.0<td>7.0<td>10.5<td>13.5<td>9.5<td>11.5<td>8.0
<tr class="g m"><td>053<td>-2<td>051<td>Haschimo<td class=t1>4.5<td>328.5<td>33<td>10,27<td>132<td>36<td>29<td><td>19.5<td>3<td>154.5<td class=r>073<td>174.0<td>027<td><td>4.5<td>7.5<td>2.0<td>11.0<td>16.0<td>10.5<td>13.5<td>9.0<td>11.0<td>14.0<td>11.5<td>8.0<td>10.0<td>12.0<td>12.5<td>10.0<td>14.0<td>13.0<td>12.5<td>11.0<td>15.5<td>9.0<td>13.5<td>12.0<td>8.0<td>10.5<td>11.5<td>13.0<td>12.5<td>10.5<td>9.0<td>12.0<td>11.0
<tr class="p"><td>054<td>5<td>059<td>Heluise<td class=t3>9.0<td>328.0<td>33<td>9,94<td>138<td>35<td>21<td><td>17.0<td>3<td>151.5<td class=r>074<td>176.5<td>024<td><td>9.0<td>12.0<td>2.0<td>10.5<td>13.5<td>11.0<td>9.0<td>11.5<td>14.0<td>11.0<td>10.0<td>9.0<td>12.0<td>8.5<td>12.0<td>15.5<td>12.5<td>14.0<td>10.0<td>16.5<td>12.5<td>13.5<td>9.5<td>11.0<td>11.5<td>12.5<td>10.0<td>11.5<td>14.0<td>13.0<td>8.0<td>12.0<td>9.5
<tr class="g m"><td>055<td>-3<td>052<td>OS286<td class=t1>4.0<td>327.5<td>33<td>9,92<td>139<td>31<td>22<td><td>18.0<td>1<td>159.5<td class=r>065<td>168.0<td>047<td><td>4.0<td>6.5<td>2.0<td>12.0<td>14.0<td>13.0<td>11.0<td>9.5<td>11.5<td>14.5<td>11.0<td>10.5<td>12.5<td>10.0<td>11.5<td>13.5<td>8.5<td>10.5<td>12.0<td>9.0<td>14.5<td>12.5<td>10.0<td>8.0<td>11.0<td>13.5<td>10.5<td>12.0<td>9.5<td>8.5<td>11.0<td>10.0<td>10.5
<tr class="p"><td>056<td>2<td>058<td>pepepe<td class=t1>4.0<td>323.5<td>33<td>9,80<td>141<td>32<td>15<td><td>14.5<td>3<td>159.0<td class=r>067<td>164.5<td>053<td><td>4.0<td>7.5<td>5.0<td>14.0<td>13.0<td>12.0<td>9.5<td>13.5<td>10.0<td>9.5<td>12.5<td>11.0<td>8.5<td>11.5<td>14.0<td>9.0<td>12.0<td>11.5<td>13.5<td>10.0<td>12.5<td>8.0<td>11.0<td>10.5<td>13.0<td>10.0<td>9.5<td>12.0<td>11.5<td>10.5<td>9.0<td>13.5<td>10.0
<tr class="g m"><td>057<td>-3<td>054<td>Rey Loui<td class=tr>2.0<td>323.5<td>31<td>10,44<td>139<td>29<td>20<td><td>19.0<td>1<td>167.0<td class=r>053<td>156.5<td>068<td><td>2.0<td>13.0<td>3.5<td>10.0<td>16.0<td>12.0<td>14.0<td>10.5<td>11.5<td>12.0<td>13.5<td>12.5<td>9.0<td>12.5<td>10.0<td>15.0<td>9.5<td>11.0<td>8.5<td>12.0<td>10.0<td>14.0<td>9.0<td>11.5<td><td>10.5<td>12.0<td>8.0<td>13.0<td><td>11.0<td>9.5<td>12.0
<tr class="m"><td>058<td>-3<td>055<td>warkla2<td class=tr>2.0<td>323.0<td>32<td>10,09<td>136<td>32<td>22<td class=l>1<td>17.5<td>1<td>181.5<td class=e>025<td>141.5<td>082<td><td>2.0<td>4.5<td>9.0<td>14.0<td>16.0<td>8.0<td>13.0<td>17.0<td class=h>17.5<td>14.5<td>13.5<td>12.0<td>12.5<td>11.0<td>13.0<td>9.0<td>12.0<td>7.0<td>8.5<td>10.0<td>9.0<td>11.5<td>7.5<td>10.0<td>8.0<td>12.5<td>9.5<td>6.0<td>11.0<td><td>8.0<td>12.0<td>7.0
<tr class="g m"><td>059<td>-2<td>057<td>0risk0fun<td class=tr>2.0<td>322.0<td>32<td>9,76<td>139<td>30<td>20<td><td>16.5<td><td>166.5<td class=r>054<td>155.5<td>070<td><td>2.0<td>10.0<td>5.0<td>16.0<td>13.5<td>12.5<td>13.0<td>12.0<td>9.0<td>11.5<td>10.5<td>13.5<td>12.0<td>8.5<td>14.0<td>10.0<td>11.0<td>12.5<td>9.5<td>10.5<td>8.0<td>12.0<td>11.5<td>10.0<td>9.0<td>13.0<td>8.5<td>10.0<td>11.0<td>12.0<td>9.5<td>8.5<td>11.0
<tr class="p"><td>060<td>1<td>061<td>skaribu<td class=t2>7.5<td>321.0<td>33<td>9,73<td>134<td>33<td>21<td class=l>1<td class=l>21.5<td class=l>4<td>159.5<td class=r>065<td>161.5<td>058<td><td>7.5<td>6.0<td>7.5<td>11.0<td>12.0<td>13.0<td>10.5<td>14.0<td>12.0<td>9.5<td>11.0<td>14.5<td>10.0<td>12.5<td>8.5<td class=h>21.5<td>9.0<td>13.5<td>11.0<td>8.0<td>12.0<td>10.5<td>9.5<td>12.0<td>11.0<td>14.5<td>10.0<td>8.0<td>12.5<td>13.5<td>9.0<td>10.5<td>5.5
<tr class="g p s"><td>061<td>1<td>062<td>Eckrentner<td class=t2>7.5<td>320.5<td>33<td>9,71<td>136<td>27<td>27<td><td>17.0<td class=b>5<td>175.0<td class=e>035<td>145.5<td>079<td><td>7.5<td>15.0<td>4.0<td>14.0<td>16.0<td>11.0<td>13.5<td>11.0<td>12.0<td>13.0<td>10.0<td>12.0<td>14.5<td>9.0<td>11.5<td>12.0<td>10.0<td>7.5<td>10.0<td>9.5<td>11.0<td>8.0<td>12.5<td>6.5<td>10.0<td>9.0<td>12.0<td>8.5<td>11.0<td>10.0<td>7.0<td>9.5<td>10.0
<tr class="p"><td>062<td>3<td>065<td>fliege77<td class=t3>8.5<td>319.5<td>32<td>9,98<td>136<td>33<td><td><td class=l>22.0<td>1<td>148.5<td class=r>080<td>171.0<td>038<td><td>8.5<td>11.5<td>3.5<td>13.5<td>6.5<td>11.5<td>7.5<td>10.0<td>11.0<td>9.5<td>12.0<td>13.0<td>8.0<td>10.5<td>12.5<td>10.0<td>14.5<td>15.0<td class=h>22.0<td>7.5<td>12.0<td>11.5<td>10.0<td>13.5<td>8.5<td>12.0<td>11.0<td>12.5<td>9.5<td>10.0<td>14.0<td>10.5<td>11.0
<tr class="g p"><td>063<td>1<td>064<td>preisfuchs<td class=t2>6.5<td>318.0<td>32<td>9,94<td>133<td>29<td>23<td class=l>1<td>17.5<td>2<td>146.5<td class=r>083<td>171.5<td>036<td><td>6.5<td>10.0<td>4.5<td>7.5<td>14.5<td>11.0<td>12.5<td>10.5<td>9.5<td>11.0<td>13.0<td>8.0<td>12.0<td>10.5<td>11.5<td>12.5<td>8.5<td>14.0<td>12.0<td>10.0<td>13.5<td>11.0<td>12.5<td>9.0<td>11.5<td>13.0<td>10.0<td>12.0<td>11.5<td class=h>17.5<td>14.0<td>11.0<td>12.5
<tr class="p"><td>064<td>4<td>068<td>phineas<td class=t4>11.5<td>317.5<td>33<td>9,62<td>136<td>30<td>19<td><td>16.0<td>2<td>163.0<td class=e>060<td>154.5<td>073<td><td>11.5<td>13.5<td>7.0<td>12.5<td>14.0<td>10.0<td>10.5<td>12.0<td>9.0<td>13.5<td>11.0<td>10.0<td>12.5<td>9.5<td>11.0<td>10.5<td>13.0<td>6.5<td>12.0<td>14.0<td>10.0<td>11.5<td>9.0<td>12.0<td>8.5<td>10.0<td>13.5<td>10.0<td>6.5<td>11.0<td>9.5<td>10.5<td>12.0
<tr class="g m"><td>066<td>-3<td>063<td>Specnaz.<td class=t1>4.5<td>317.0<td>33<td>9,61<td>137<td>34<td>16<td class=l>1<td class=l>20.5<td>1<td>158.5<td class=r>068<td>158.5<td>063<td><td>4.5<td>8.0<td>4.0<td>14.0<td>12.0<td>11.5<td>10.0<td>13.0<td>12.5<td>9.0<td>11.5<td>10.0<td>12.0<td>8.0<td>14.5<td>13.5<td>9.5<td>11.0<td>10.5<td>8.5<td>11.0<td>13.0<td class=h>20.5<td>10.0<td>9.0<td>12.5<td>8.0<td>11.0<td>10.5<td>12.0<td>9.5<td>11.0<td>8.0
<tr class="z"><td>067<td>0<td>067<td>sportgemeinschaft 53<td class=t2>6.0<td>316.0<td>33<td>9,58<td>133<td>29<td>23<td><td>19.0<td><td>150.0<td class=r>077<td>166.0<td>049<td><td>6.0<td>9.0<td>2.0<td>7.0<td>13.0<td>12.0<td>10.5<td>9.0<td>11.0<td>12.5<td>10.0<td>14.0<td>11.5<td>9.5<td>12.0<td>10.5<td>13.5<td>11.0<td>12.5<td>10.0<td>9.5<td>13.0<td>12.0<td>10.5<td>14.0<td>11.0<td>8.5<td class=h>19.0<td>11.5<td>7.5<td>10.0<td>12.0<td>9.0
<tr class="g p"><td>068<td>1<td>069<td>joe.17<td class=t3>8.5<td>314.0<td>33<td>9,52<td>133<td>36<td>18<td><td>17.5<td>2<td>151.5<td class=r>074<td>162.5<td>057<td><td>8.5<td>8.0<td class=x>0.0<td>11.0<td>14.0<td>13.0<td>12.0<td>10.5<td>9.0<td>11.5<td>12.5<td>10.0<td>13.0<td>9.5<td>11.0<td>12.0<td>10.5<td>14.5<td>8.0<td>11.5<td>10.0<td>12.5<td>9.0<td>13.0<td>10.0<td>11.0<td>8.5<td>12.5<td>14.5<td>9.0<td>10.5<td>11.5<td>9.5
<tr class="m"><td>069<td>-3<td>066<td>minicooper<td class=tr>2.5<td>313.5<td>33<td>9,50<td>132<td>25<td>24<td class=l>1<td>18.0<td class=l>4<td>169.0<td class=e>049<td>144.5<td>080<td><td>2.5<td>8.0<td>6.5<td>15.0<td>13.5<td>12.0<td>11.0<td>10.0<td>14.0<td>13.0<td>11.5<td>12.5<td>10.0<td>15.0<td>12.0<td>8.5<td>11.0<td>9.5<td>7.5<td>10.0<td>6.0<td>11.0<td>7.5<td>9.0<td>12.0<td>8.0<td>10.5<td>9.0<td>12.0<td>7.0<td>9.0<td>11.0<td>8.5
<tr class="g p"><td>070<td>1<td>071<td>fraf<td class=t1>4.5<td>312.5<td>30<td>10,42<td>128<td>27<td>28<td><td>17.0<td><td>177.0<td class=e>033<td>135.5<td>083<td><td>4.5<td>11.5<td>6.0<td>15.5<td>14.0<td>11.0<td>12.5<td>13.0<td>10.5<td>15.5<td>12.0<td>11.0<td>13.5<td>12.5<td>10.0<td>15.0<td>9.0<td>11.0<td>8.0<td><td>10.5<td>12.0<td>9.5<td>7.0<td><td>11.0<td>8.5<td>10.0<td>6.5<td>12.0<td><td>9.0<td>10.0
<tr class="m"><td>071<td>-1<td>070<td>smmail<td class=t1>4.5<td>308.5<td>32<td>9,64<td>132<td>28<td>28<td class=l>1<td>17.5<td><td>155.0<td class=r>072<td>153.5<td>075<td><td>4.5<td>4.5<td>6.0<td>11.5<td>13.0<td>10.0<td>9.5<td>12.0<td>11.0<td>13.5<td>10.5<td>12.5<td>9.0<td>11.0<td>13.0<td>10.5<td>12.0<td>8.5<td>10.0<td>11.5<td>9.5<td>10.0<td>12.0<td>7.5<td>9.0<td>11.5<td>10.0<td>8.0<td>12.0<td>11.5<td>10.5<td>8.0<td>9.0
<tr class="g z s"><td>072<td>0<td>072<td>ggonzo<td class=t2>7.5<td>307.5<td>31<td>9,92<td>134<td>28<td>17<td><td>17.0<td class=b>5<td>147.5<td class=r>081<td>160.0<td>060<td><td>7.5<td>11.0<td>4.5<td>12.0<td>16.0<td>9.5<td>14.0<td>10.5<td>12.0<td>11.5<td>13.5<td>10.0<td>8.5<td>12.5<td>6.5<td><td>10.0<td>9.5<td>12.0<td>10.5<td>11.0<td>13.0<td>9.0<td>12.5<td>10.0<td>11.5<td>14.0<td>8.5<td>10.0<td>12.0<td>9.5<td>12.0<td>10.0
<tr class="z"><td>073<td>0<td>073<td>Jofinwolf<td class=t3>9.0<td>307.5<td>33<td>9,32<td>128<td>39<td>20<td><td>16.5<td>3<td>157.5<td class=r>071<td>150.0<td>076<td><td>9.0<td>8.5<td>4.5<td>11.5<td>15.0<td>10.0<td>12.5<td>8.0<td>11.5<td>12.0<td>10.5<td>9.0<td>13.0<td>11.5<td>10.0<td>12.5<td>9.5<td>10.5<td>11.0<td>8.0<td>12.0<td>9.5<td>11.5<td>8.5<td>10.0<td>12.0<td>9.0<td>11.0<td>8.0<td>10.5<td>7.5<td>9.0<td>11.5
<tr class="g z"><td>074<td>0<td>074<td>Teddy-KGB<td class=t3>8.5<td>305.0<td>33<td>9,24<td>132<td>25<td>17<td><td>15.5<td>3<td>149.0<td class=r>078<td>156.0<td>069<td><td>8.5<td>8.0<td>4.0<td>12.5<td>12.0<td>10.0<td>11.0<td>9.5<td>12.5<td>13.0<td>10.5<td>9.0<td>11.0<td>12.0<td>10.0<td>13.5<td>8.5<td>11.5<td>10.5<td>9.5<td>12.0<td>10.0<td>11.0<td>14.5<td>9.0<td>10.5<td>12.0<td>8.0<td>11.5<td>10.0<td>9.0<td>12.5<td>7.5
<tr class="p"><td>075<td>1<td>076<td>Rembrandt<td class=t2>7.0<td>298.5<td>30<td>9,95<td>126<td>30<td>19<td><td>16.5<td>2<td>141.5<td class=r>084<td>157.0<td>066<td><td>7.0<td>16.0<td>2.0<td>12.5<td>6.0<td><td>10.5<td>11.0<td>12.0<td>10.0<td>13.5<td>9.0<td>11.5<td>12.0<td>10.5<td>13.0<td>11.0<td>9.0<td>12.5<td>10.0<td><td>11.0<td>10.5<td>12.0<td>9.5<td>11.0<td>13.0<td>10.0<td>8.5<td>12.0<td>9.5<td>11.0<td>10.0
<tr class="g m"><td>076<td>-1<td>075<td>youmake222<td class=tr>2.0<td>297.0<td>29<td>10,24<td>124<td>25<td>23<td><td>18.5<td>1<td>173.5<td class=e>042<td>123.5<td>086<td><td>2.0<td>9.0<td>4.0<td>12.5<td>14.0<td>11.0<td>12.0<td>13.5<td>11.5<td>14.5<td>12.0<td>10.5<td>13.0<td>12.0<td>9.5<td>14.0<td>11.0<td>12.5<td>8.0<td><td>10.0<td><td>9.5<td>8.0<td>11.0<td><td>10.0<td>7.5<td>9.0<td><td>8.5<td>10.0<td>
<tr class="z"><td>077<td>0<td>077<td>ksu<td><td>291.0<td>29<td>10,03<td>118<td>32<td>24<td class=l>1<td>18.5<td>1<td>115.5<td class=r>089<td>175.5<td>026<td><td><td>11.5<td>2.0<td><td>8.0<td>11.0<td>12.0<td>10.0<td>11.5<td>10.0<td>9.0<td>12.0<td>10.0<td>8.0<td>12.5<td>10.0<td>14.0<td>11.5<td>12.0<td>10.0<td>13.5<td>9.0<td>12.0<td>11.0<td>10.5<td>13.0<td>12.0<td>11.0<td>9.5<td>12.5<td>11.0<td>10.0<td class=h>18.5
<tr class="g p"><td>078<td>1<td>079<td>UliTs<td class=t4>11.0<td>290.0<td>24<td>12,08<td>120<td>16<td>28<td><td>20.5<td><td>181.5<td class=e>025<td>108.5<td>088<td><td>11.0<td>9.5<td><td>13.5<td>19.0<td>13.0<td>12.0<td>14.5<td>12.0<td>13.0<td>11.5<td>12.0<td>13.5<td>10.0<td>15.0<td>12.5<td>9.0<td>11.0<td>8.0<td><td>12.0<td>9.5<td><td>10.0<td>11.5<td><td>9.0<td>13.0<td><td><td>10.5<td><td>
<tr class="m"><td>079<td>-1<td>078<td>VFLBORUSSIA<td class=t3>8.5<td>287.5<td>33<td>8,71<td>121<td>31<td>18<td class=l>1<td>17.5<td>2<td>140.0<td class=r>085<td>147.5<td>077<td><td>8.5<td>6.0<td>4.0<td>10.5<td>12.0<td>9.5<td>8.0<td>11.5<td>10.0<td>9.0<td>12.0<td>7.5<td>10.5<td>8.5<td>11.0<td>10.0<td>8.0<td>12.0<td>9.5<td>10.0<td>7.5<td>11.0<td>8.5<td>12.5<td>9.0<td>10.0<td>11.5<td>8.0<td>10.5<td class=h>17.5<td>9.0<td>4.5<td>6.5
<tr class="g z"><td>080<td>0<td>080<td>Trinkfix<td class=t2>7.5<td>285.5<td>28<td>10,20<td>122<td>34<td>15<td><td>16.5<td>2<td>149.0<td class=r>078<td>136.5<td>094<td><td>7.5<td>8.5<td>3.5<td>11.0<td>13.0<td>10.0<td>12.5<td>9.0<td>11.5<td>12.0<td>10.0<td>8.5<td>13.0<td>10.5<td>9.5<td><td>11.0<td>12.5<td>10.0<td>12.5<td>6.5<td>11.0<td>9.0<td>12.0<td><td>10.5<td>9.5<td>11.0<td>8.0<td><td>12.0<td>9.5<td>11.0
<tr class="z"><td>081<td>0<td>081<td>Phönixx<td class=t2>6.0<td>275.5<td>31<td>8,89<td>117<td>27<td>18<td class=l>1<td>17.5<td><td>147.5<td class=r>081<td>128.0<td>085<td><td>6.0<td>5.5<td>5.0<td>12.0<td>10.5<td>11.0<td>9.0<td>8.0<td>10.0<td>7.5<td>11.5<td>9.0<td class=h>16.5<td>10.5<td>8.5<td>12.0<td>8.0<td>9.5<td>11.0<td>6.5<td>4.5<td>10.0<td>8.5<td>9.0<td>11.0<td>7.5<td>10.0<td>12.0<td>8.5<td>9.5<td>7.5<td>11.0<td>8.0
<tr class="g p s"><td>082<td>1<td>083<td>iTechDachs<td class=t4>11.0<td>273.0<td>30<td>9,10<td>113<td>35<td>17<td class=l>1<td>18.5<td>3<td>139.0<td class=r>086<td>134.0<td>084<td><td>11.0<td>9.0<td>8.5<td>10.5<td>13.0<td>9.5<td>11.0<td>12.5<td>10.0<td>8.5<td>12.0<td>11.5<td>9.0<td>10.0<td><td>12.5<td>9.0<td>10.5<td>7.0<td>11.0<td>8.0<td><td>10.0<td>9.5<td>11.0<td>8.5<td>12.0<td>10.5<td><td>9.0<td>11.0<td>8.0<td class=h>18.5
<tr class="z"><td>084<td>0<td>084<td>Zyzol<td class=t1>5.5<td>257.5<td>28<td>9,20<td>106<td>27<td>18<td class=l>1<td>18.0<td class=l>4<td>102.0<td class=r>090<td>155.5<td>071<td><td>5.5<td>9.5<td><td>10.5<td>4.0<td>9.0<td>11.0<td><td>8.5<td>10.0<td>12.0<td>9.5<td>11.0<td>8.0<td>10.0<td>12.5<td>9.0<td>11.5<td>10.0<td>12.0<td>8.5<td>10.0<td>11.0<td>9.0<td class=h>18.0<td>10.5<td>12.0<td>11.0<td>9.5<td>13.0<td>10.0<td>12.5<td>11.0
<tr class="g z"><td>085<td>0<td>085<td>Prognostix<td class=t2>6.5<td>256.0<td>23<td>11,13<td>106<td>19<td>23<td><td>20.5<td><td>178.5<td class=e>031<td>77.5<td>091<td><td>6.5<td>13.5<td>4.0<td>12.5<td>15.0<td>11.0<td>13.5<td>12.0<td>11.5<td>14.0<td>13.0<td>10.0<td>12.5<td>11.0<td>9.5<td>12.0<td>10.0<td>13.0<td><td><td>11.5<td><td>9.0<td><td>12.0<td><td><td>10.5<td><td><td>11.0<td><td>
<tr class="z"><td>086<td>0<td>086<td>Number_One<td class=t1>4.5<td>252.5<td>22<td>11,48<td>106<td>22<td>19<td class=l>1<td>18.5<td><td>190.0<td class=e>013<td>62.5<td>093<td><td>4.5<td>13.0<td>7.0<td>14.0<td>13.5<td>12.0<td>11.5<td class=h>18.5<td>12.0<td>13.0<td>11.0<td>14.5<td>10.0<td>12.5<td>13.0<td>11.5<td>9.0<td>12.0<td><td>10.5<td><td><td>11.0<td><td><td>9.5<td><td><td>12.0<td><td><td>9.0<td>
<tr class="g p"><td>087<td>1<td>088<td>nightfly<td class=t4>12.0<td>237.0<td>31<td>7,65<td>100<td>22<td>16<td><td>15.0<td>2<td>127.0<td class=y>087<td>110.0<td>087<td><td>12.0<td>4.5<td>2.0<td>8.0<td>10.0<td>8.5<td>7.0<td>9.0<td>6.5<td>10.5<td>8.0<td>7.5<td>9.5<td>6.0<td>10.0<td>8.5<td>7.0<td>9.0<td>8.0<td>6.5<td>10.0<td class=x>0.0<td>2.0<td>8.0<td>8.5<td>6.0<td>7.0<td>10.5<td>8.5<td>9.5<td>6.0<td>7.5<td class=x>0.0
<tr class="m"><td>088<td>-1<td>087<td>La Ola<td class=t1>4.5<td>230.0<td>22<td>10,45<td>99<td>17<td>15<td><td>16.5<td>1<td>151.5<td class=e>074<td>78.5<td>090<td><td>4.5<td>11.0<td>4.0<td>12.5<td>9.0<td>10.0<td>11.5<td>8.5<td>12.0<td>10.5<td>9.0<td>11.0<td>10.0<td>9.5<td>12.0<td>8.0<td>10.5<td>9.0<td><td><td>10.0<td><td><td>9.5<td><td><td>11.0<td><td><td>8.5<td><td><td>10.0
<tr class="g z"><td>090<td>0<td>090<td>rompoi55<td class=t3>8.5<td>193.5<td>16<td>12,09<td>85<td>18<td>9<td><td>19.5<td>1<td>193.5<td class=e>004<td>0.0<td><td><td>8.5<td>9.0<td>10.0<td>15.0<td>16.5<td>12.0<td>13.5<td>11.0<td>14.0<td>12.5<td>10.0<td>13.0<td>11.5<td>14.5<td>12.0<td>9.5<td><td><td><td><td><td><td><td><td><td><td><td><td><td><td><td><td>
<tr class="p"><td>092<td>3<td>095<td>Nordborusse68<td class=t3>9.0<td>170.5<td>15<td>11,37<td>72<td>18<td>11<td><td>17.5<td>1<td>170.5<td class=e>047<td>0.0<td><td><td>9.0<td><td>12.0<td>11.5<td>14.0<td>10.0<td>13.0<td>12.5<td>9.5<td>11.0<td>12.0<td>10.5<td>14.0<td>11.0<td>9.0<td><td><td><td><td><td><td><td><td><td><td><td><td><td><td><td><td>
<tr class="g z"><td>093<td>0<td>093<td>Sternzeichen<td class=tr>2.0<td>169.0<td>17<td>9,94<td>72<td>15<td>11<td><td>20.0<td>1<td>84.0<td class=r>092<td>85.0<td>089<td><td>2.0<td><td>10.0<td><td>12.5<td>9.0<td><td>11.0<td>10.0<td><td>13.0<td>9.5<td><td>6.5<td><td>13.5<td>13.0<td>10.0<td><td>13.5<td>10.0<td>7.0<td><td><td><td><td>11.5<td><td><td><td><td>
<tr class="p"><td>101<td>2<td>103<td>Ihrefelder<td class=t4>10.5<td>86.0<td>7<td>12,29<td>34<td>6<td>10<td><td>16.5<td><td>86.0<td class=e>091<td>0.0<td><td><td>10.5<td>12.5<td>15.0<td>12.5<td>15.0<td>16.5<td>13.0<td><td><td><td><td><td><td><td><td><td><td><td><td><td><td><td><td><td><td><td><td><td><td><td><td><td>
<tr class="g p s"><td>102<td>2<td>104<td>Lebenspostler<td class=t1>4.5<td>78.5<td>8<td>9,81<td>33<td>7<td>6<td><td>16.5<td><td>78.5<td class=e>093<td>0.0<td><td><td>4.5<td>7.5<td>10.5<td>12.5<td>14.0<td>6.5<td>13.5<td>16.5<td><td><td><td><td><td><td><td><td><td><td><td><td><td><td><td><td><td><td><td><td><td><td><td><td><td>
<tr class="m"><td>104<td>-2<td>102<td>Wolle185<td><td>76.5<td>8<td>9,56<td>30<td>10<td>7<td><td>16.0<td>1<td>6.5<td class=r>102<td>70.0<td>092<td><td><td><td><td><td><td><td><td><td><td><td><td><td><td><td><td><td><td><td><td>7.5<td><td><td><td><td><td><td><td><td>4.0<td>16.0<td>7.0<td>13.0<td>9.5<td>13.5
<tr class="g z"><td>115<td>0<td>115<td>Tobi.S<td><td>14.5<td>1<td>14,50<td>5<td><td>3<td><td>14.5<td><td>14.5<td class=e>097<td>0.0<td><td><td><td>14.5<td><td><td><td><td><td><td><td><td><td><td><td><td><td><td><td><td><td><td><td><td><td><td><td><td><td><td><td><td><td><td><td>
<tr class="p"><td>117<td>6<td>123<td>Warp<td class=t2>6.5<td>6.5<td>1<td>6,50<td>3<td>1<td><td><td>6.5<td><td>6.5<td class=e>102<td>0.0<td><td><td>6.5<td><td><td><td><td><td><td><td><td><td><td><td><td><td><td><td><td><td><td><td><td><td><td><td><td><td><td><td><td><td><td><td><td>
</tbody></table>
</body></html>
